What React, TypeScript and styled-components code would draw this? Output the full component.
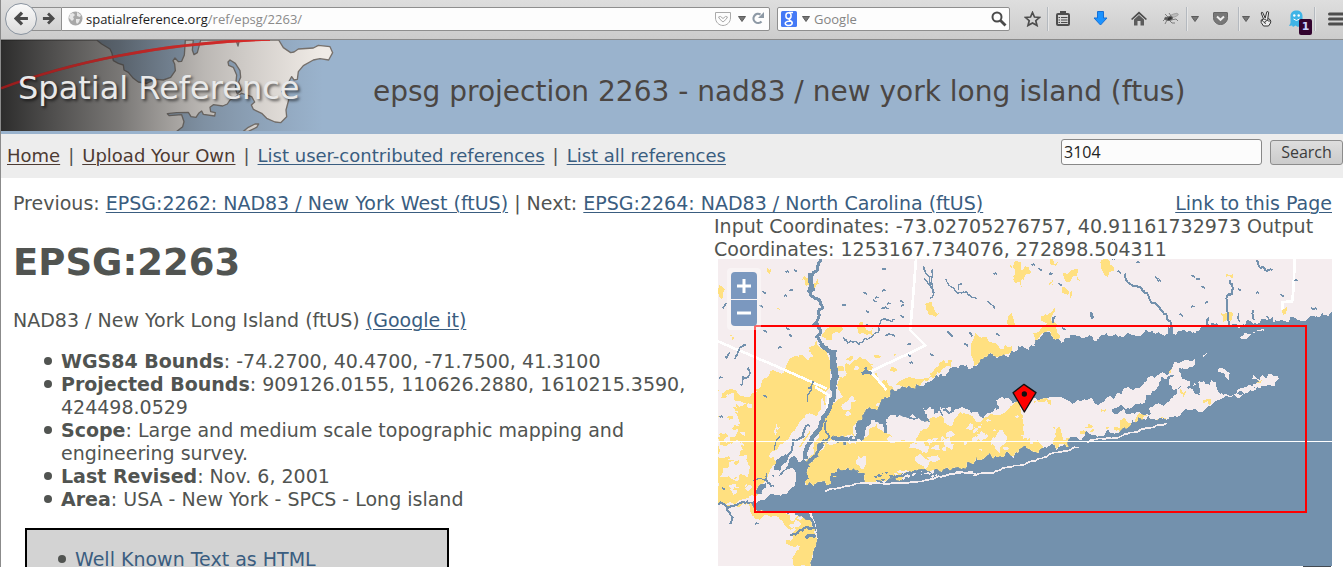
import React from "react";
import styled, { createGlobalStyle } from "styled-components";

const Global = createGlobalStyle`
  * { box-sizing: border-box; }
  body { margin: 0; background: #fff; }
`;

const uiFont = `"Open Sans", "Noto Sans", sans-serif`;

const Window = styled.div`
  height: 100vh;
  overflow: hidden;
  border-left: 1px solid #8b8b8b;
  font: 19px/23px "DejaVu Sans", Verdana, sans-serif;
  color: #515451;
`;

/* ---------- browser toolbar ---------- */

const Toolbar = styled.header`
  display: flex;
  align-items: center;
  height: 40px;
  padding: 0 0 2px 4px;
  background: linear-gradient(#dedede, #cccccc);
  border-bottom: 1px solid #8b8b8b;
  font-family: ${uiFont};
  overflow: hidden;
`;

const BackButton = styled.button`
  flex: none;
  z-index: 1;
  display: grid;
  place-items: center;
  width: 32px;
  height: 32px;
  padding: 0;
  border: 1px solid #8a94a0;
  border-radius: 50%;
  background: linear-gradient(#fafafa, #dcdcdc);
`;

const ForwardButton = styled.button`
  flex: none;
  display: grid;
  place-items: center;
  width: 30px;
  height: 24px;
  margin-left: -6px;
  padding: 0 0 0 4px;
  border: solid #8f8f8f;
  border-width: 1px 0;
  background: linear-gradient(#e2e2e2, #d2d2d2);
`;

const Field = styled.div`
  display: flex;
  align-items: center;
  height: 24px;
  border: 1px solid #8f8f8f;
  background: #fdfdfd;
`;

const AddressField = styled(Field)`
  flex: 1;
  gap: 3px;
  padding: 0 4px 0 6px;
  border-radius: 0 2px 2px 0;
`;

const SearchField = styled(Field)`
  flex: none;
  width: 233px;
  gap: 4px;
  margin: 0 7px 0 7px;
  padding: 0 2px 0 3px;
  border-radius: 2px;
`;

const Address = styled.div`
  flex: 1;
  font-size: 13px;
  line-height: 20px;
  color: #8a8a8a;
  white-space: nowrap;
  b { font-weight: 400; color: #1c1c1c; }
`;

const BarInput = styled.input`
  flex: 1;
  min-width: 0;
  padding: 0;
  border: 0;
  outline: 0;
  background: none;
  font: 13px/20px ${uiFont};
  &::placeholder { color: #858585; opacity: 1; }
`;

const IconButton = styled.button<{ $w?: number }>`
  flex: none;
  position: relative;
  display: grid;
  place-items: center;
  width: ${(p) => p.$w ?? 16}px;
  height: 24px;
  padding: 0;
  border: 0;
  background: none;
`;

const MenuButton = styled(IconButton)`
  margin-right: -16px;
`;

const Separator = styled.span`
  flex: none;
  width: 1px;
  height: 24px;
  background: #b4b9bf;
  box-shadow: 1px 0 #e6e6e6;
`;

const Badge = styled.span`
  position: absolute;
  right: 2px;
  top: 12px;
  width: 13px;
  height: 16px;
  border-radius: 2px;
  background: #33042f;
  color: #c9d4ff;
  font: 700 11px/16px "DejaVu Sans", sans-serif;
  text-align: center;
`;

/* ---------- site header ---------- */

const Banner = styled.div`
  position: relative;
  display: flex;
  align-items: center;
  height: 94px;
  background: #9ab3cd;
`;

const LogoArt = styled.svg`
  flex: none;
  align-self: flex-start;
  width: 339px;
  height: 91px;
`;

const LogoName = styled.span`
  position: absolute;
  left: 17px;
  top: 28px;
  font-size: 32px;
  line-height: 40px;
  color: #e9e9e9;
  text-shadow: 2px 2px 3px rgba(0, 0, 0, 0.6);
  white-space: nowrap;
`;

const BannerTitle = styled.span`
  margin: 10px 0 0 33px;
  font-size: 28px;
  line-height: 34px;
  color: #4b4643;
  white-space: nowrap;
`;

const SiteNav = styled.nav`
  display: flex;
  justify-content: space-between;
  align-items: flex-start;
  height: 44px;
  padding: 5px 0 0 6px;
  background: #ededed;
  font-size: 18px;
  white-space: nowrap;
`;

const NavLinks = styled.div`
  display: flex;
  gap: 8px;
  padding-top: 5px;
`;

const Link = styled.a<{ $visited?: boolean }>`
  color: ${(p) => (p.$visited ? "#4d3b33" : "#3a5d80")};
  text-decoration: underline;
  text-underline-offset: 2px;
  text-decoration-thickness: 1px;
`;

const SearchForm = styled.form`
  display: flex;
  align-items: center;
  gap: 8px;
`;

const TextBox = styled.input`
  width: 201px;
  height: 26px;
  padding: 0 2px;
  border: 1px solid #888;
  border-radius: 3px;
  background: #fcfcfc;
  font: 16px/24px ${uiFont};
  color: #222;
`;

const SubmitButton = styled.button`
  width: 73px;
  height: 25px;
  padding: 0;
  border: 1px solid #8c8c8c;
  border-radius: 3px;
  background: linear-gradient(#dedede, #cbcbcb);
  font: 16px/22px ${uiFont};
  color: #3c3c3c;
`;

/* ---------- page ---------- */

const Page = styled.main`
  padding: 14px 11px 0 12px;
`;

const PagerRow = styled.div`
  display: flex;
  justify-content: space-between;
  white-space: nowrap;
`;

const Columns = styled.div`
  display: flex;
  justify-content: space-between;
`;

const Details = styled.section`
  flex: 0 1 676px;
`;

const Title = styled.h1`
  margin: 24px 0 23px;
  font-size: 37px;
  line-height: 47px;
`;

const Text = styled.p`
  margin: 0;
`;

const List = styled.ul`
  margin: 18px 0 17px;
  padding-left: 48px;
  list-style: none;
  li::before {
    content: "";
    display: inline-block;
    width: 8px;
    height: 8px;
    margin: 0 9px 0 -17px;
    border-radius: 50%;
    background: #515451;
    vertical-align: 3px;
  }
`;

const Formats = styled.div`
  width: 424px;
  margin-left: 12px;
  border: 2px solid #000;
  background: #d3d3d3;
  a { text-decoration: none; }
`;

const MapColumn = styled.section`
  flex: 0 0 618px;
`;

const MapFrame = styled.div`
  position: relative;
  height: 307px;
  margin: -2px 0 0 4px;
  background: #7391ad;
`;

const MapArt = styled.svg`
  display: block;
  width: 100%;
  height: 100%;
`;

const ZoomControl = styled.div`
  position: absolute;
  left: 9px;
  top: 9px;
  display: grid;
  gap: 1px;
  padding: 4px;
  border-radius: 4px;
  background: rgba(255, 255, 255, 0.4);
`;

const ZoomButton = styled.button<{ $end?: boolean }>`
  display: grid;
  place-items: center;
  width: 26px;
  height: ${(p) => (p.$end ? 26 : 27)}px;
  padding: 0;
  border: 0;
  border-radius: ${(p) => (p.$end ? "0 0 4px 4px" : "4px 4px 0 0")};
  background: #7b98bf;
`;

const MapCaption = styled.div`
  width: 28px;
  height: 20px;
  margin: 0 1px 0 auto;
  background: #444b52;
`;

/* ---------- map geometry ---------- */

type Pt = [number, number];

const parse = (s: string): Pt[] =>
  s.trim().split(/\s+/).map((p) => p.split(",").map(Number) as Pt);

const random = (start: number) => {
  let seed = start;
  return () => {
    seed = (seed * 16807) % 2147483647;
    return seed / 2147483647;
  };
};

/* Roughens a line by displacing midpoints, so coasts get small inlets. */
function rough(src: string, amp: number, closed = true): string {
  let pts = parse(src);
  const rnd = random(7 + src.length * 31);
  for (let pass = 0; pass < 3; pass++) {
    const out: Pt[] = [];
    const n = pts.length;
    for (let i = 0; i < n; i++) {
      const a = pts[i];
      out.push(a);
      if (i === n - 1 && !closed) break;
      const b = pts[(i + 1) % n];
      const len = Math.hypot(b[0] - a[0], b[1] - a[1]);
      if (len < 8 || len > 300) continue;
      const d = Math.min(amp, len * 0.6) / (pass * 0.5 + 1);
      out.push([
        Math.round((a[0] + b[0]) / 2 + (rnd() - 0.5) * d),
        Math.round((a[1] + b[1]) / 2 + (rnd() - 0.5) * d * 2),
      ]);
    }
    pts = out;
  }
  return "M" + pts.map((p) => p.join(" ")).join("L") + (closed ? "Z" : "");
}

/* Small irregular patches scattered over a rectangle. */
function scatter(seed: number, count: number, x: number, y: number, w: number, h: number, size: number): string {
  const rnd = random(seed);
  rnd();
  let d = "";
  for (let i = 0; i < count; i++) {
    const cx = Math.round(x + rnd() * w);
    const cy = Math.round(y + rnd() * h);
    const r = 3 + rnd() * size;
    let ring = "";
    for (let k = 0; k < 7; k++) {
      const q = r * (0.4 + rnd());
      const t = (k / 7) * Math.PI * 2;
      ring += `${k ? "L" : "M"}${Math.round(cx + Math.cos(t) * q * 1.4)} ${Math.round(cy + Math.sin(t) * q)}`;
    }
    d += ring + "Z";
  }
  return d;
}

const mainland =
  "54,100 1900,100 1900,304 1880,314 1866,304 1860,320 1832,318 1800,328 1782,322 1760,336 1740,332 1722,342 1716,322 1700,330 1685,328 1668,338 1650,334 1635,344 1610,342 1590,348 1560,350 1530,348 1526,316 1518,344 1505,350 1490,362 1460,366 1440,362 1420,372 1405,352 1400,372 1380,370 1350,366 1320,378 1295,374 1270,382 1240,376 1205,374 1192,388 1180,388 1174,378 1140,380 1115,374 1095,384 1060,386 1050,366 1030,370 1005,390 990,408 970,412 955,408 935,422 916,438 890,446 878,432 858,442 840,450 832,466 800,466 775,476 745,488 726,490 700,506 680,518 650,522 640,534 600,536 570,542 556,560 540,580 520,596 492,608 486,628 468,640 456,652 470,670 440,682 410,678 395,688 375,692 352,720 330,742 312,748 290,744 265,762 245,784 215,796 200,818 170,838 168,872 150,878 168,900 200,908 265,912 300,920 335,938 346,950 348,1000 340,1040 332,1070 54,1070";

const longIsland =
  "306,810 322,784 330,760 356,740 370,700 400,690 430,698 436,706 440,690 470,688 490,690 496,670 506,648 530,636 548,642 562,666 556,630 580,616 600,616 640,606 655,620 690,636 680,612 665,590 690,588 710,610 735,618 720,590 750,590 760,606 800,598 830,606 850,624 870,610 890,600 908,586 886,572 930,566 960,572 1100,570 1160,570 1220,562 1265,552 1290,538 1330,522 1365,506 1376,494 1400,496 1418,470 1440,458 1470,454 1484,446 1486,458 1470,470 1436,474 1424,490 1400,506 1378,516 1368,540 1338,556 1322,580 1290,596 1232,596 1236,606 1262,602 1285,612 1330,616 1345,618 1348,596 1376,580 1412,566 1432,552 1440,534 1474,536 1490,552 1500,536 1480,528 1490,522 1530,528 1550,516 1552,538 1580,552 1640,540 1690,520 1720,506 1734,500 1690,516 1650,508 1665,500 1732,498 1736,506 1700,522 1655,538 1590,562 1530,588 1470,600 1440,618 1400,630 1380,622 1360,626 1330,628 1310,636 1284,652 1250,668 1225,660 1200,676 1170,672 1150,682 1120,682 1108,686 1106,712 1070,722 1052,706 1020,718 980,714 955,728 930,734 900,738 880,746 862,736 830,740 800,758 770,772 730,778 690,784 640,786 610,802 580,800 556,818 495,818 500,790 470,782 430,780 410,788 400,800 380,826 340,828 318,826";

const statenIsland = "214,796 250,788 286,786 292,800 286,828 248,850 200,862 168,880 170,852 190,838 200,812";

const southForkTip = "1610,542 1640,530 1665,522 1680,504 1700,506 1716,494 1734,500 1734,508 1690,526 1650,540 1610,554";

const yellows = [
  "54,540 150,560 205,500 240,490 280,440 300,436 340,440 330,410 350,392 372,420 386,440 392,480 384,540 376,600 340,640 310,700 250,700 200,760 150,790 54,790",
  "54,740 100,730 160,760 220,740 240,770 190,820 120,870 54,880",
  "54,880 150,880 210,910 260,912 300,920 346,940 350,990 330,1070 270,1070 280,1040 300,1010 255,990 290,960 240,930 170,930 150,900 100,890",
  "376,360 400,346 430,355 400,370 380,390 366,380",
  "306,210 325,204 330,220 352,208 358,222 344,236 320,228",
  "414,500 440,490 440,460 480,440 520,460 510,490 540,520 580,530 700,500 640,560 540,600 460,650 480,680 390,690 340,760 350,690 380,600 430,560 414,540",
  "690,490 720,455 755,450 752,470 700,505",
  "815,440 826,370 860,380 870,395 915,404 940,400 900,440 850,460 820,466",
  "930,155 965,155 965,230 945,220 945,180",
  "920,340 935,310 955,345",
  "676,292 696,275 722,306 682,302",
  "470,350 490,340 500,360 520,352 500,376 480,370",
  "960,165 985,170 994,190 970,210 955,200",
  "1090,190 1135,180 1139,212 1094,210",
  "1050,150 1076,152 1064,166",
  "1046,225 1058,208 1060,225",
  "1086,230 1118,240 1110,266",
  "1205,150 1230,155 1240,185 1225,200 1206,180",
  "1580,190 1600,192 1596,206 1578,204",
  "1562,306 1600,312 1594,338 1570,336",
  "1745,300 1760,290 1764,306 1750,316",
  "1000,370 1040,340 1025,316 1064,295 1056,335 1070,360 1080,380 1055,390 1040,366 1010,395",
  "54,236 72,236 70,262 56,262",
  "200,176 214,178 212,186 200,184",
  "230,290 244,292 240,300",
  "90,376 102,380 98,390",
  "84,960 104,1000 92,1008",
  "120,1040 150,1020 160,1030 150,1060 132,1058",
  "300,804 330,740 380,700 460,700 500,680 530,640 560,670 640,690 700,620 750,650 790,610 850,624 950,570 970,620 975,680 1000,720 960,740 700,800 600,820 440,830 380,830 320,830",
  "995,570 1052,570 1052,584 1000,584",
  "1060,652 1080,652 1090,690 1110,684 1106,716 1066,720 1060,690",
  "960,690 990,682 1000,700 1030,712 980,720 960,730",
  "1202,596 1218,596 1216,608 1204,606",
  "1260,652 1290,640 1310,618 1340,618 1314,650 1256,670",
  "1370,626 1400,616 1396,630 1372,636",
  "1510,570 1534,560 1530,590 1510,580",
  "1440,540 1458,542 1450,560",
  "1396,486 1416,474 1410,496",
  "1668,512 1686,508 1680,522",
];

const clearings = [
  "54,540 100,548 110,580 100,610 120,640 90,680 54,680",
  "54,690 90,700 130,720 100,750 54,740",
  "70,770 130,750 150,770 120,790 100,810 60,800",
  "225,750 250,700 290,650 330,610 370,560 376,600 330,660 290,720 250,760",
  "230,640 245,650 226,680",
  "590,650 610,640 650,650 655,680 620,690 590,670",
  "560,630 600,616 660,620 690,640 660,640 600,640",
  "640,700 670,690 690,700 660,720",
  "720,690 750,680 762,700 740,712",
  "880,680 900,660 920,690 900,730 890,720",
  "820,650 850,640 840,670",
  "470,748 500,740 496,764 470,764",
  "640,740 700,740 690,752 650,756",
  "430,580 450,560 470,570 450,600 430,600",
  "220,800 260,796 280,810 240,830 200,840 210,820",
  "60,910 130,900 160,930 200,940 260,950 250,1000 240,1070 54,1070 54,940",
];

const streams = [
  ["365,147 352,180 334,204 326,244 350,266 364,284 356,310 346,340 360,358 350,380 366,400", 9],
  ["364,400 400,430 408,480 402,540 394,570 372,620 346,670 322,710 316,748", 13],
  ["330,190 340,244", 13],
  ["400,420 406,500 404,540", 20],
  ["434,390 460,396 486,398 510,384 536,366 540,340 560,330 586,330", 4],
  ["556,378 586,380", 5],
  ["668,170 690,200 700,240 690,266", 4],
  ["698,176 700,250", 4],
  ["672,205 704,250", 4],
  ["735,208 760,234 800,244 832,266", 4],
  ["775,240 786,222", 4],
  ["860,274 884,296", 4],
  ["105,448 138,404", 5],
  ["76,440 90,430", 6],
  ["146,470 150,490 130,500 122,526", 5],
  ["68,290 80,280", 5],
  ["340,512 334,540 324,575", 4],
  ["380,630 376,660 388,680 370,690 352,730 330,750", 5],
  ["395,680 440,686 470,690", 8],
  ["330,648 312,660 310,680 280,690 276,720 260,745 240,780", 6],
  ["262,740 230,780", 18],
  ["240,680 224,720", 4],
  ["200,790 204,820 222,828", 5],
  ["160,812 200,814", 4],
  ["54,884 90,890 130,876 150,878", 6],
  ["84,890 96,920 90,942", 6],
  ["270,976 300,960 345,952", 7],
  ["316,984 345,982", 10],
  ["300,760 310,800 300,826", 26],
  ["264,768 330,770", 5],
  ["1278,190 1280,214 1320,232 1345,256 1370,284 1398,312 1412,340 1416,366", 6],
  ["1590,210 1600,236 1582,256 1582,300 1588,350", 6],
  ["1670,150 1690,170 1718,180", 6],
  ["1066,318 1060,340", 5],
  ["1660,300 1662,330", 5],
  ["1616,310 1620,335", 4],
  ["1700,318 1716,336", 5],
  ["742,366 758,382", 6],
  ["812,368 816,380", 6],
  ["794,404 804,410", 5],
  ["1176,308 1180,324", 9],
  ["486,492 514,492", 10],
  ["500,474 500,490", 5],
  ["394,806 410,790 440,784 470,790", 8],
  ["410,820 430,800 460,798", 7],
  ["580,798 620,790 680,786", 7],
  ["620,616 650,624 672,620", 5],
  ["730,600 750,612", 7],
] as [string, number][];

const ponds: Pt[] = [
  [262, 190], [286, 178], [274, 240], [192, 246], [256, 260], [184, 282], [552, 182], [496, 246],
  [530, 262], [524, 272], [552, 244], [502, 298], [550, 300], [560, 290], [566, 280], [606, 274],
  [608, 288], [606, 312], [432, 290], [434, 384], [240, 412], [272, 376], [116, 340], [264, 350],
  [886, 196], [894, 370], [628, 402], [628, 436], [634, 460], [696, 428], [62, 508], [196, 360],
  [1000, 163], [1020, 177], [1052, 194], [1080, 216], [1240, 152], [1258, 182], [1314, 156],
  [1370, 204], [1378, 214], [1480, 192], [1494, 212], [1510, 228], [1520, 276], [1444, 314],
  [1478, 292], [1618, 232], [1672, 254], [1746, 252], [1788, 210], [1838, 296], [1846, 298],
  [1092, 350], [64, 625], [196, 555], [170, 940], [70, 835], [330, 536], [504, 340],
];

const whiteLines = [
  "648,147 640,250 630,360 676,406 512,484 560,540",
  "54,394 200,456 380,536",
  "1784,147 1780,240 1776,274 1748,276 1746,300",
  "345,531 385,555 380,600",
];

const barrier = [
  "375,844 420,834 480,820 540,820 620,820 680,810 720,800 750,790 770,786 820,786",
  "820,796 860,790 900,780 960,766 1000,752 1050,732 1110,720 1136,712",
  "1160,698 1210,688 1260,680 1310,666 1345,654 1400,640",
  "768,788 830,794",
];

const islands = [
  "1412,500 1440,486 1448,508 1470,512 1464,530 1440,526 1420,540 1408,524",
  "1508,438 1520,428 1518,440",
  "1552,486 1566,474 1590,488 1586,510 1572,490",
  "1618,382 1636,368 1660,366 1690,356 1694,364 1650,376 1624,388",
  "1438,470 1478,458 1484,462 1450,476",
  "318,900 334,904 346,940 350,980 344,944 330,912",
];

function ReferenceMap() {
  const land = [mainland, longIsland, statenIsland, southForkTip].map((s) => rough(s, 14)).join("");
  return (
    <MapArt
      viewBox="54 147 1842 921"
      preserveAspectRatio="xMinYMin slice"
      shapeRendering="crispEdges"
      aria-label="Map of Long Island"
    >
      <defs>
        <clipPath id="land"><path d={land} /></clipPath>
      </defs>
      <path d={land} fill="#f5edef" />
      <g clipPath="url(#land)">
        {yellows.map((y, i) => <path key={i} d={rough(y, 18)} fill="#ffe080" />)}
        {clearings.map((c, i) => <path key={i} d={rough(c, 24)} fill="#f5edef" />)}
        <g fill="#f5edef">
          <path d={scatter(11, 22, 54, 540, 130, 340, 12)} />
          <path d={scatter(23, 14, 400, 460, 220, 200, 9)} />
          <path d={scatter(37, 34, 560, 600, 420, 150, 9)} />
          <path d={scatter(53, 12, 150, 890, 190, 150, 10)} />
        </g>
        <g fill="#ffe080">
          <path d={scatter(71, 14, 54, 560, 70, 300, 8)} />
          <path d={scatter(83, 10, 400, 320, 200, 160, 6)} />
          <path d={scatter(97, 8, 1100, 650, 200, 20, 6)} />
        </g>
        <path d={scatter(41, 26, 395, 784, 80, 34, 3)} fill="#7391ad" />
        <path d={scatter(43, 16, 520, 788, 160, 26, 3)} fill="#7391ad" />
      </g>
      <path d={scatter(47, 22, 590, 784, 120, 22, 2)} fill="#f5edef" />
      <g fill="none" stroke="#fff">
        {barrier.map((b, i) => <path key={i} d={rough(b, 4, false)} strokeWidth="5" stroke="#f5edef" />)}
        {whiteLines.map((w, i) => <path key={i} d={rough(w, 0, false)} strokeWidth="8" />)}
      </g>
      {islands.map((s, i) => <path key={i} d={rough(s, 8)} fill="#f5edef" />)}
      <g fill="none" stroke="#7391ad">
        {streams.map(([s, w], i) => <path key={i} d={rough(s, 9, false)} strokeWidth={w} />)}
        {ponds.map(([x, y], i) => (
          <path key={i} d={`M${x - 5} ${y - 3 + (i % 3) * 3}l5 ${i % 2 ? 4 : -4}l5 3`} strokeWidth="5" />
        ))}
      </g>
      <g shapeRendering="auto">
        <path d="M54 694.500H1896" stroke="#fff" strokeWidth="3" />
        <path d="M165 348H1818V906H165Z" fill="none" stroke="#f00" strokeWidth="6" />
        <path d="M972 523L1008 548L973 606L939 548Z" fill="#f00" stroke="#111" strokeWidth="4" strokeLinejoin="round" />
        <circle cx="973" cy="552" r="8" fill="#111" />
      </g>
    </MapArt>
  );
}

/* ---------- icons ---------- */

const Arrow = ({ flip, size = 14 }: { flip?: boolean; size?: number }) => (
  <svg width={size} height={size} viewBox="0 0 14 14" fill="none" stroke="#4a4a4a" strokeWidth="3">
    <path d={flip ? "M1 7H12M6.500 1.500L12 7L6.500 12.500" : "M13 7H2M7.500 1.500L2 7L7.500 12.500"} />
  </svg>
);

const Caret = () => (
  <svg width="8" height="6" viewBox="0 0 8 6"><path d="M.5 .5H7.500L4 5.500Z" fill="#777" stroke="#5c5c5c" /></svg>
);

const Globe = () => (
  <svg width="15" height="15" viewBox="0 0 15 15">
    <circle cx="7.500" cy="7.500" r="7" fill="#a8a8a8" />
    <path d="M2 3L5 2L7 4L5 6L6 8L4 10L1 7ZM9 1L13 4L12 6L9 5ZM8 8L12 8L11 11L9 13L8 11Z" fill="#e6e6e6" />
  </svg>
);

const PocketOutline = () => (
  <svg width="16" height="14" viewBox="0 0 16 14" fill="none" stroke="#aaa">
    <path d="M.5 .5H15.500V6C15.500 10 12 13.500 8 13.500S.5 10 .5 6Z" />
    <path d="M3.500 5Q5 3 8 6.500Q11 3 12.500 5Q12 7 8 10Q4 7 3.500 5Z" />
  </svg>
);

const Reload = () => (
  <svg width="13" height="13" viewBox="0 0 13 13" fill="none">
    <path d="M9.500 9.500A4.600 4.600 0 1 1 8.500 2.500" stroke="#8d99a5" strokeWidth="2.200" />
    <path d="M12 0V6H6Z" fill="#8d99a5" />
  </svg>
);

const GoogleMark = () => (
  <svg width="16" height="16" viewBox="0 0 16 16" fill="none">
    <rect width="16" height="16" rx="1.500" fill="#4479f6" />
    <g stroke="#fff" strokeWidth="1.500">
      <ellipse cx="7.500" cy="4.800" rx="2.600" ry="3" />
      <path d="M8 1.600H12M9.500 7Q7 8.500 9 9.500Q12 11 11 13Q9.500 15 6.500 14.500Q3.500 13.500 4.500 11.500Q6 10 9.500 10" />
    </g>
  </svg>
);

const Magnifier = () => (
  <svg width="16" height="16" viewBox="0 0 16 16" fill="none" stroke="#4a4a4a">
    <circle cx="6" cy="6" r="4.500" strokeWidth="2" /><path d="M9.500 9.500L14.500 14.500" strokeWidth="2.800" />
  </svg>
);

const Star = () => (
  <svg width="17" height="16" viewBox="0 0 17 16">
    <path d="M8.500 1.500L10.500 6L15.500 6.500L11.800 9.700L13 14.500L8.500 12L4 14.500L5.200 9.700L1.500 6.500L6.500 6Z" fill="none" stroke="#4d4d4d" strokeWidth="1.700" />
  </svg>
);

const Clipboard = () => (
  <svg width="14" height="15" viewBox="0 0 14 15" fill="none" stroke="#4d4d4d">
    <rect x="1" y="3" width="12" height="11" rx="1" strokeWidth="2" />
    <path d="M5 3V1H9V3" strokeWidth="2" />
    <path d="M2.500 6.500H4M5 6.500H11.500M2.500 9H4M5 9H11.500M2.500 11.500H4M5 11.500H11.500" strokeWidth="1.200" />
  </svg>
);

const Download = () => (
  <svg width="15" height="15" viewBox="0 0 15 15">
    <path d="M4.500 .5H10.500V7H14L7.500 14L1 7H4.500Z" fill="#1b93ff" stroke="#1670d6" />
  </svg>
);

const Home = () => (
  <svg width="16" height="15" viewBox="0 0 16 15">
    <path d="M0 8L8 .5L16 8L14.800 9L8 3L1.200 9Z" fill="#4d4d4d" />
    <path d="M3 8.500L8 4L13 8.500V14.500H9.500V10H6.500V14.500H3Z" fill="#5c5c5c" />
  </svg>
);

const Fly = () => (
  <svg width="16" height="13" viewBox="0 0 16 13" fill="none" stroke="#666">
    <ellipse cx="11" cy="3.500" rx="4.500" ry="1.600" fill="#bbb" stroke="#999" strokeWidth=".7" transform="rotate(-18 11 3.500)" />
    <ellipse cx="6.500" cy="6.500" rx="3" ry="1.800" fill="#333" transform="rotate(-20 6.500 6.500)" />
    <circle cx="3" cy="6.500" r="1.300" fill="#555" />
    <path d="M8 8L13 7L15 9M6 8L9 11L12 11M4 8L2 12M5 5L2 2M8 4L6 1M2 7L0 9" strokeWidth=".8" />
  </svg>
);

const PocketSolid = () => (
  <svg width="15" height="13" viewBox="0 0 15 13">
    <path d="M.5 1Q.5 .5 1 .5H14Q14.500 .5 14.500 1V5.500C14.500 9.500 11.500 12.500 7.500 12.500S.5 9.500 .5 5.500Z" fill="#777" stroke="#666" />
    <path d="M4 4.500L7.500 7.800L11 4.500" fill="none" stroke="#eee" strokeWidth="2" />
  </svg>
);

const Peace = () => (
  <svg width="12" height="16" viewBox="0 0 12 16" fill="#eee" stroke="#333" strokeLinejoin="round">
    <path d="M3.500 8L1.200 2Q1.500 .8 2.700 1.500L5.200 7L6.800 .8Q8 .2 8.700 1.200L7.800 7.500L10 8.500Q11.300 10 10.500 12L8.500 15H3.500L1.200 11.500V9Z" />
    <path d="M3.500 8.500L5.500 8L6.500 10L4 11.500M7.800 7.500L7.500 10M2 9L4 11.500L6 12.500M9 9V11" fill="none" strokeWidth=".9" />
  </svg>
);

const Ghost = () => (
  <svg width="15" height="17" viewBox="0 0 15 17">
    <path d="M1.500 6C1.500 2.500 4 .5 7.500 .5S13.500 2.500 13.500 6V14L15 16L11 15.500L9 17L6.500 15.500L4 17L3 15.500L0 16L1.500 13Z" fill="#3fb4e6" />
    <circle cx="5.300" cy="5.500" r="1.200" fill="#fff" /><circle cx="9.700" cy="5.500" r="1.200" fill="#fff" />
    <path d="M4.500 9Q7.500 12 10.500 9" fill="none" stroke="#fff" />
  </svg>
);

const Burger = () => (
  <svg width="18" height="14" viewBox="0 0 18 14" stroke="#4d4d4d" strokeWidth="3" strokeLinecap="round">
    <path d="M1.500 2H17M1.500 7H17M1.500 12H17" />
  </svg>
);

function Logo() {
  const outline =
    "M0 120H290L305 132L330 147L336 160L340 182L355 190L370 195L372 210L385 217L400 235L415 246L440 250L465 238L490 240L512 232L526 212L524 192L519 182L525 174L535 185L545 184L553 165L556 120H580L577 150L582 164L592 158L602 120H708L714 138L718 120H836L850 143L872 158L882 156L895 147L940 144L955 136L990 140L998 158L986 180L960 176L940 180L910 197L895 215L892 238L882 240L875 230L866 246L852 262L846 275L862 288L866 300L858 330L860 350L842 368L825 366L800 355L785 340L760 328L754 315L764 306L755 290L725 280L690 300L682 312L668 318L640 314L630 322L632 335L646 338L644 348L610 343L605 333L596 340L588 352L573 350L565 337L530 338L502 341L508 347L545 344L552 365L548 380L528 396H0Z";
  return (
    <LogoArt viewBox="3 120 1017 273" preserveAspectRatio="none" aria-hidden="true">
      <defs>
        <linearGradient id="shade">
          <stop offset="0" stopColor="#1c1c1c" stopOpacity=".92" />
          <stop offset=".1" stopColor="#262626" stopOpacity=".85" />
          <stop offset=".35" stopColor="#303030" stopOpacity=".62" />
          <stop offset=".6" stopColor="#404040" stopOpacity=".3" />
          <stop offset=".95" stopColor="#555" stopOpacity="0" />
        </linearGradient>
      </defs>
      <rect x="3" y="120" width="1017" height="273" fill="#9ab3cd" />
      <g stroke="#77716c" strokeWidth="4" strokeLinejoin="round">
        <path d={outline} fill="#f0ebe6" />
        <path d="M684 186L690 180L706 190L720 212L722 232L716 245L724 270L712 282L706 266L710 225L700 202L686 196Z" fill="#9ab3cd" />
        <path d="M730 394L745 382L765 372L776 372L770 382L745 394Z" fill="#f0ebe6" />
      </g>
      <path d="M3 265C200 190 480 128 810 118" fill="none" stroke="#e2403c" strokeWidth="8" />
      <rect x="3" y="120" width="1017" height="273" fill="url(#shade)" />
      <path d="M3 265C200 190 480 128 810 118" fill="none" stroke="#dd1a1a" strokeOpacity=".6" strokeWidth="8" />
    </LogoArt>
  );
}

const facts = [
  ["WGS84 Bounds", "-74.2700, 40.4700, -71.7500, 41.3100"],
  ["Projected Bounds", "909126.0155, 110626.2880, 1610215.3590, 424498.0529"],
  ["Scope", "Large and medium scale topographic mapping and engineering survey."],
  ["Last Revised", "Nov. 6, 2001"],
  ["Area", "USA - New York - SPCS - Long island"],
];

export default function App() {
  return (
    <Window>
      <Global />
      <Toolbar>
        <BackButton aria-label="Back"><Arrow size={15} /></BackButton>
        <ForwardButton aria-label="Forward"><Arrow flip size={13} /></ForwardButton>
        <AddressField>
          <Globe />
          <Address><b>spatialreference.org</b>/ref/epsg/2263/</Address>
          <IconButton $w={18} aria-label="Save to Pocket"><PocketOutline /></IconButton>
          <IconButton $w={13} aria-label="History"><Caret /></IconButton>
          <IconButton $w={14} aria-label="Reload"><Reload /></IconButton>
        </AddressField>
        <SearchField>
          <GoogleMark />
          <IconButton $w={9} aria-label="Choose search engine"><Caret /></IconButton>
          <BarInput placeholder="Google" aria-label="Web search" />
          <IconButton aria-label="Go"><Magnifier /></IconButton>
        </SearchField>
        <IconButton $w={30} aria-label="Bookmark"><Star /></IconButton>
        <Separator />
        <IconButton $w={30} aria-label="Bookmarks"><Clipboard /></IconButton>
        <IconButton $w={45} aria-label="Downloads"><Download /></IconButton>
        <IconButton $w={32} aria-label="Home"><Home /></IconButton>
        <IconButton $w={31} aria-label="Firebug"><Fly /></IconButton>
        <Separator />
        <IconButton $w={15} aria-label="Firebug menu"><Caret /></IconButton>
        <IconButton $w={36} aria-label="Pocket"><PocketSolid /></IconButton>
        <Separator />
        <IconButton $w={14} aria-label="Pocket menu"><Caret /></IconButton>
        <IconButton $w={26} aria-label="Peace"><Peace /></IconButton>
        <IconButton $w={35} aria-label="Ghostery"><Ghost /><Badge>1</Badge></IconButton>
        <Separator />
        <MenuButton $w={44} aria-label="Menu"><Burger /></MenuButton>
      </Toolbar>

      <Banner>
        <Logo />
        <LogoName>Spatial Reference</LogoName>
        <BannerTitle>epsg projection 2263 - nad83 / new york long island (ftus)</BannerTitle>
      </Banner>

      <SiteNav>
        <NavLinks>
          <Link href="#home" $visited>Home</Link>
          <span>|</span>
          <Link href="#upload" $visited>Upload Your Own</Link>
          <span>|</span>
          <Link href="#user">List user-contributed references</Link>
          <span>|</span>
          <Link href="#all">List all references</Link>
        </NavLinks>
        <SearchForm onSubmit={(e) => e.preventDefault()}>
          <TextBox type="text" defaultValue="3104" aria-label="Search references" />
          <SubmitButton>Search</SubmitButton>
        </SearchForm>
      </SiteNav>

      <Page>
        <PagerRow>
          <span>
            Previous: <Link href="#2262">EPSG:2262: NAD83 / New York West (ftUS)</Link> | Next:{" "}
            <Link href="#2264">EPSG:2264: NAD83 / North Carolina (ftUS)</Link>
          </span>
          <Link href="#here">Link to this Page</Link>
        </PagerRow>
        <Columns>
          <Details>
            <Title>EPSG:2263</Title>
            <Text>NAD83 / New York Long Island (ftUS) <Link href="#google">(Google it)</Link></Text>
            <List>
              {facts.map(([name, value]) => (
                <li key={name}><b>{name}</b>: {value}</li>
              ))}
            </List>
            <Formats>
              <List>
                <li><Link href="#html">Well Known Text as HTML</Link></li>
              </List>
            </Formats>
          </Details>
          <MapColumn>
            <Text>Input Coordinates: -73.02705276757, 40.91161732973 Output Coordinates: 1253167.734076, 272898.504311</Text>
            <MapFrame>
              <ReferenceMap />
              <ZoomControl>
                <ZoomButton aria-label="Zoom in">
                  <svg width="14" height="14" viewBox="0 0 14 14"><path d="M0 7H14M7 0V14" stroke="#fff" strokeWidth="3" /></svg>
                </ZoomButton>
                <ZoomButton $end aria-label="Zoom out">
                  <svg width="14" height="14" viewBox="0 0 14 14"><path d="M0 7H14" stroke="#fff" strokeWidth="3" /></svg>
                </ZoomButton>
              </ZoomControl>
            </MapFrame>
            <MapCaption />
          </MapColumn>
        </Columns>
      </Page>
    </Window>
  );
}
